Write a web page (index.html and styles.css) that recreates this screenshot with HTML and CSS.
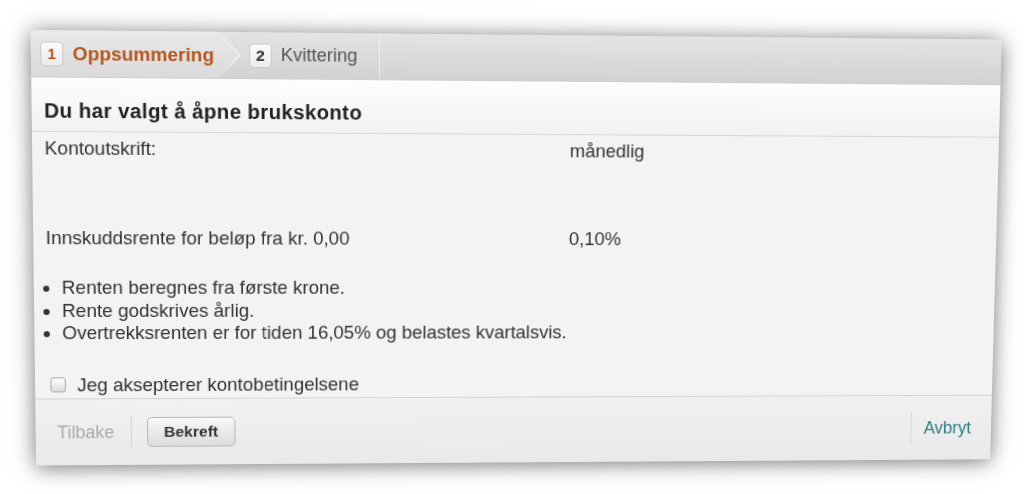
FILE: index.html
```html
<!DOCTYPE html>
<html lang="no">
<head>
  <meta charset="UTF-8" />
  <meta name="viewport" content="width=device-width, initial-scale=1" />
  <title>Brukskonto</title>
  <link rel="stylesheet" href="styles.css">
</head>
<body>

<div class="page">
  <div class="panel">
    <div class="steps">
      <div class="step active"><span class="num">1</span>Oppsummering</div>
      <div class="step"><span class="num">2</span>Kvittering</div>
    </div>

    <h1 class="title">Du har valgt å åpne brukskonto</h1>

    <div class="content">
      <div class="row">
        <span class="label">Kontoutskrift:</span>
        <span class="value">månedlig</span>
      </div>
      <div class="row rate">
        <span class="label">Innskuddsrente for beløp fra kr. 0,00</span>
        <span class="value">0,10%</span>
      </div>

      <ul class="notes">
        <li>Renten beregnes fra første krone.</li>
        <li>Rente godskrives årlig.</li>
        <li>Overtrekksrenten er for tiden 16,05% og belastes kvartalsvis.</li>
      </ul>

      <label class="accept"><input type="checkbox" class="check" /> Jeg aksepterer kontobetingelsene</label>
    </div>

    <div class="actions">
      <a class="back">Tilbake</a>
      <button class="confirm">Bekreft</button>
      <a class="cancel">Avbryt</a>
    </div>
  </div>
</div>

</body>
</html>
```

FILE: styles.css
```css
html, body {
  margin: 0; padding: 0; height: 100%;
  overflow: hidden;
  background: #fff;
  font-family: "Liberation Sans", Arial, sans-serif;
  color: #333;
}

.page {
  padding: 36px 0 0 41px;
}

.panel {
  width: 965px;
  background: #f3f3f3;
  box-shadow: 0 2px 20px rgba(0, 0, 0, 0.55);
  transform: perspective(2000px) rotate(0.46deg) rotateX(-4.8deg) rotateY(4.4deg);
}

/* step bar */
.steps {
  height: 46px;
  display: flex;
  background: linear-gradient(#e4e4e4, #d2d2d2);
  border-bottom: 1px solid #cfcfcf;
  box-sizing: border-box;
}

.step {
  position: relative;
  display: flex;
  align-items: center;
  gap: 9px;
  font-size: 18px;
  color: #555;
}

.step.active {
  padding: 0 4px 0 9px;
  background: linear-gradient(#e9e9e9, #dadada);
  color: #b5561e;
  font-weight: bold;
  font-size: 18.5px;
  z-index: 1;
}

/* chevron after the active step */
.step.active::before,
.step.active::after {
  content: "";
  position: absolute;
  top: 0;
  left: 100%;
  height: 100%;
  clip-path: polygon(0 0, 100% 50%, 0 100%);
}

.step.active::before {
  width: 22px;
  background: #f4f4f4;
}

.step.active::after {
  width: 20px;
  background: linear-gradient(#e9e9e9, #dadada);
}

.step + .step {
  padding: 0 21px 0 30px;
  border-right: 1px solid #ececec;
}

.num {
  width: 22px;
  height: 24px;
  display: flex;
  align-items: center;
  justify-content: center;
  border: 1px solid #c9c9c9;
  border-radius: 4px;
  background: linear-gradient(#fbfbfb, #ececec);
  box-sizing: border-box;
  font-size: 15px;
  font-weight: bold;
  color: #333;
}

.active .num {
  color: #b5561e;
}

/* heading */
.title {
  margin: 0;
  padding: 20px 0 8px 12px;
  line-height: 24px;
  font-size: 20px;
  letter-spacing: 0.35px;
  color: #222;
  background: linear-gradient(#fdfdfd, #f2f2f2);
  border-bottom: 1px solid #d6d6d6;
}

/* content */
.content {
  padding: 5px 0 2px 12px;
  font-size: 18.5px;
}

.row {
  display: flex;
  line-height: 22px;
}

.row .label {
  width: 516px;
}

.rate {
  margin-top: 66px;
}

.notes {
  margin: 27px 0 0;
  padding-left: 15px;
  line-height: 22.5px;
}

.accept {
  margin-top: 29px;
  display: flex;
  align-items: center;
  gap: 11px;
  line-height: 22px;
}

.check {
  appearance: none;
  margin: 0 0 0 3px;
  width: 15px;
  height: 15px;
  border: 1px solid #a9a9a9;
  border-radius: 3px;
  background: linear-gradient(#fdfdfd, #dedede);
}

/* footer */
.actions {
  height: 66px;
  display: flex;
  align-items: center;
  padding: 0 21px 0 21px;
  border-top: 1px solid #d2d2d2;
  background: linear-gradient(#f1f1f1, #e9e9e9);
  font-size: 17.5px;
}

.back {
  color: #aaa;
  padding-right: 16px;
  line-height: 32px;
  border-right: 1px solid #d4d4d4;
}

.confirm {
  margin-left: 15px;
  width: 87px;
  height: 30px;
  border: 1px solid #b7b7b7;
  border-radius: 5px;
  background: linear-gradient(#f8f8f8, #dcdcdc);
  font-family: inherit;
  font-size: 15.5px;
  font-weight: bold;
  color: #333;
}

.cancel {
  margin-left: auto;
  padding-left: 13px;
  line-height: 32px;
  border-left: 1px solid #d8d8d8;
  color: #2b7e82;
}
```
